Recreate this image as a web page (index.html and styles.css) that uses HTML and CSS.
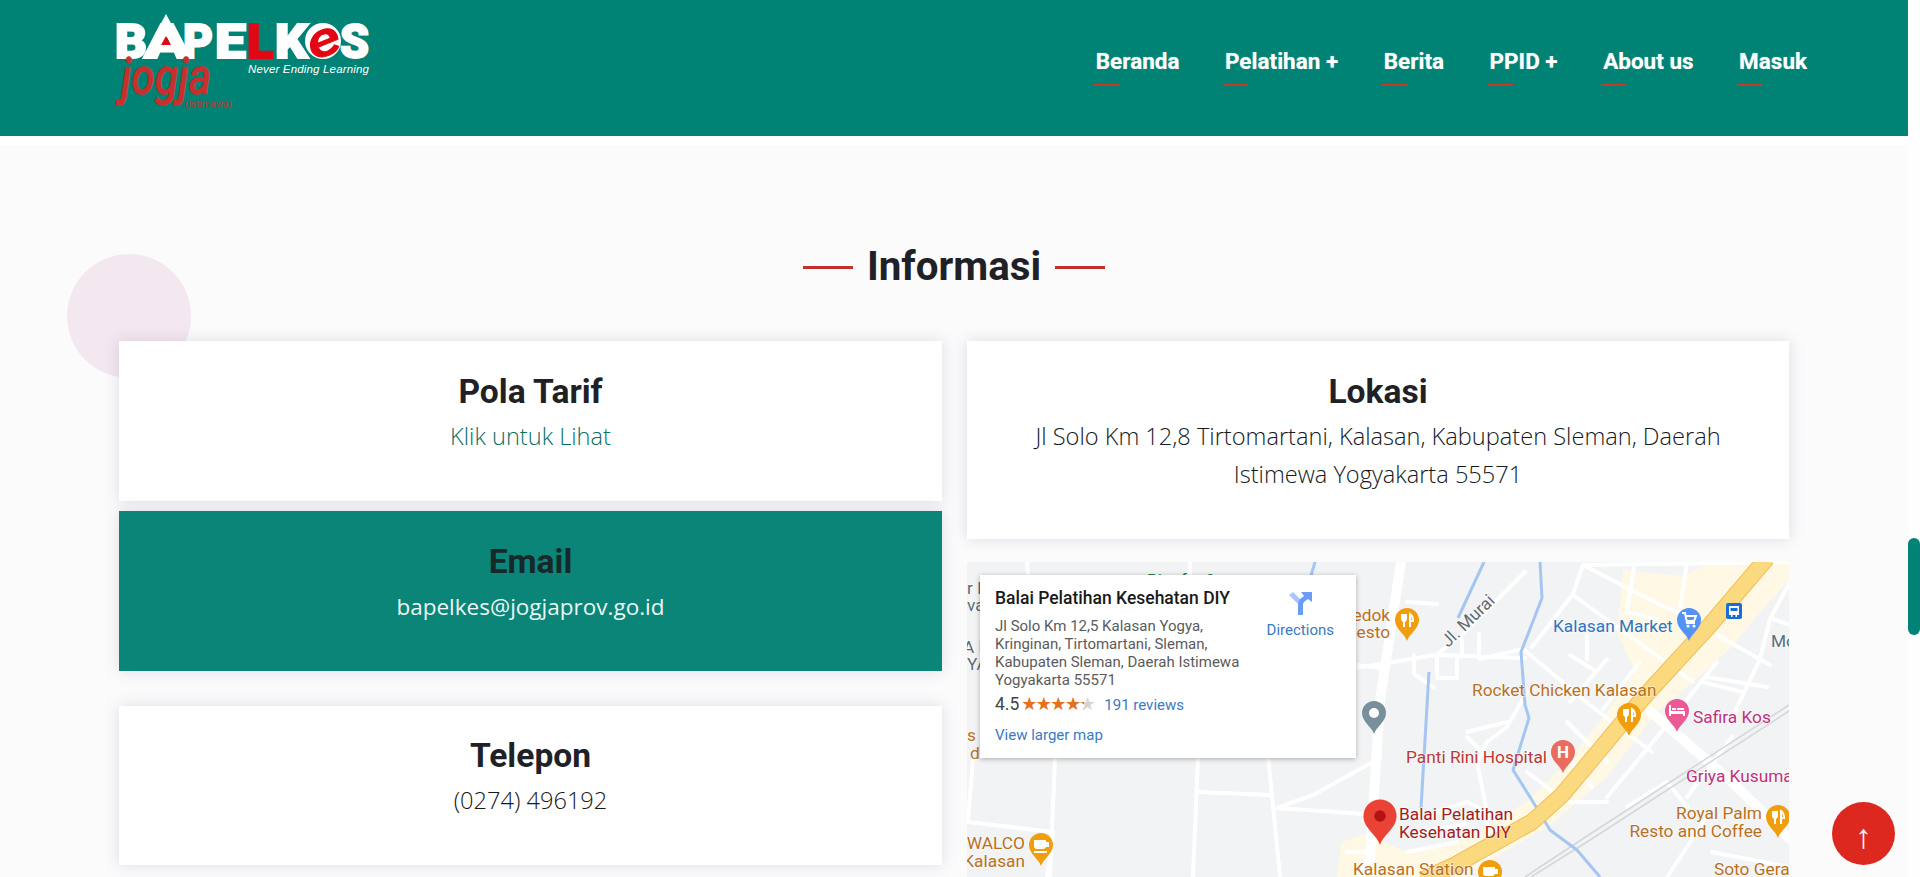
FILE: index.html
```html
<!DOCTYPE html>
<html lang="id">
<head>
<meta charset="utf-8">
<title>Informasi - Bapelkes Jogja</title>
<link rel="stylesheet" href="styles.css">
</head>
<body>
<div class="page">
  <header class="header">
    <a class="logo" href="#" aria-label="Bapelkes Jogja">
      <svg width="262" height="110" viewBox="0 0 262 110">
        <text class="lg-w" x="0" y="44" textLength="32" lengthAdjust="spacingAndGlyphs">B</text>
        <text class="lg-w" x="29" y="44" textLength="46" lengthAdjust="spacingAndGlyphs">A</text>
        <polygon class="lg-white" points="38,24 51,0 64,24"/>
        <polygon class="lg-red" points="46,31 51,22 56,31"/>
        <text class="lg-w" x="68" y="44" textLength="30" lengthAdjust="spacingAndGlyphs">P</text>
        <text class="lg-w" x="100" y="44" textLength="31" lengthAdjust="spacingAndGlyphs">E</text>
        <text class="lg-r" x="132" y="44" textLength="26" lengthAdjust="spacingAndGlyphs">L</text>
        <text class="lg-w" x="160" y="44" textLength="33" lengthAdjust="spacingAndGlyphs">K</text>
        <ellipse class="lg-white" cx="208" cy="27" rx="18" ry="18"/>
        <text class="lg-e" x="192" y="42" textLength="33" lengthAdjust="spacingAndGlyphs" transform="rotate(-22 208 27)">e</text>
        <text class="lg-w" x="225" y="44" textLength="29" lengthAdjust="spacingAndGlyphs">S</text>
        <text class="lg-tag" x="133" y="59" textLength="121">Never Ending Learning</text>
        <g transform="translate(6 80) scale(1 1.28)">
          <text class="lg-jogja" x="0" y="0" textLength="90" lengthAdjust="spacingAndGlyphs">jogja</text>
        </g>
        <text class="lg-ist" x="70" y="93" textLength="47" lengthAdjust="spacingAndGlyphs">(istimewa)</text>
      </svg>
    </a>
    <nav class="nav">
      <a class="nav-link" href="#">Beranda</a>
      <a class="nav-link" href="#">Pelatihan +</a>
      <a class="nav-link" href="#">Berita</a>
      <a class="nav-link" href="#">PPID +</a>
      <a class="nav-link" href="#">About us</a>
      <a class="nav-link" href="#">Masuk</a>
    </nav>
  </header>

  <main class="main">
    <span class="blob"></span>
    <h1 class="title"><span class="dash"></span>Informasi<span class="dash"></span></h1>
    <div class="grid">
      <div class="col">
        <section class="card card-pola">
          <h2>Pola Tarif</h2>
          <p><a class="tarif" href="#">Klik untuk Lihat</a></p>
        </section>
        <section class="card card-email">
          <h2>Email</h2>
          <p>bapelkes@jogjaprov.go.id</p>
        </section>
        <section class="card card-tel">
          <h2>Telepon</h2>
          <p>(0274) 496192</p>
        </section>
      </div>
      <div class="col">
        <section class="card card-lokasi">
          <h2>Lokasi</h2>
          <p>Jl Solo Km 12,8 Tirtomartani, Kalasan, Kabupaten Sleman, Daerah Istimewa Yogyakarta 55571</p>
        </section>
        <div class="map">
          <svg class="map-svg" width="822" height="315" viewBox="0 0 822 315">
            <defs>
              <path id="pin" d="M0,21 C-2,14 -12,9 -12,0 A12,12 0 1 1 12,0 C12,9 2,14 0,21Z"/>
              <g id="fork">
                <path class="ic-line" d="M-5,-6 V-2 Q-5,1 -3,1 Q-1,1 -1,-2 V-6 M-3,-6 V7 M3,7 V-6 Q6,-4 6,1 H3"/>
              </g>
              <g id="cup">
                <path class="ic-fill" d="M-7,-5 H5 V-3 H8 V2 H5 Q4,4 2,4 H-4 Q-7,4 -7,1Z M-7,6 H6 V8 H-7Z"/>
              </g>
            </defs>

            <rect class="m-bg" width="822" height="315"/>

            <polygon class="m-beige" points="656,8 715,14 745,0 822,0 822,18 785,60 765,85 715,130 690,150 640,215 585,262 520,300 500,315 370,315 374,280 398,272 440,290 490,280 560,240 600,200 640,150 668,110 650,70"/>

            <g class="m-road">
              <path d="M434,0 L413,138 L403,295 L395,315" class="m-wide"/>
              <path d="M231,196 L226,315 M233,230 L303,233 M301,193 L313,315 M413,196 L346,233 L310,246 L413,253 M88,196 L83,315 M6,196 L1,260 L86,270 L80,315 M60,0 L61,13 M223,0 L223,13 M390,103 L413,106"/>
              <path d="M388,106 L469,93 L558,96 M469,93 L495,73 L558,10 M495,73 L495,93 M512,72 L512,93 M440,40 L470,42 M447,93 L447,112 L466,125 M470,93 L470,116 L490,116 M490,95 L490,116"/>
              <path d="M565,85 L606,32 L616,3 L693,43 L730,57 M616,3 L822,0 M556,87 L513,97 M606,33 L726,120 M556,87 L623,143 L685,190 M663,30 L660,50 L690,57 M663,30 L668,0 M720,0 L713,47 M620,73 L620,97 M603,93 L630,110 M640,97 L603,140 M673,100 L636,147 M750,73 L803,103 M823,20 L803,57 L793,97 L763,160 M806,57 L823,63"/>
              <path d="M684,150 L765,220 L822,276" class="m-wide"/>
              <path d="M750,100 L690,175 L640,235 M735,120 L775,130 M740,115 L800,125 M765,175 L720,235 M660,245 L700,220 L720,245 M740,255 L700,315 M745,290 L822,305 M600,160 L640,200 M560,130 L540,165 L520,180 L510,200 L520,250 L520,300 M500,170 L540,160 M500,175 L520,195 M470,250 L500,240 L530,255 M450,270 L500,262 M380,290 L400,290 M440,290 L490,280 M560,210 L600,240 L640,240 M600,195 L625,225"/>
            </g>

            <path class="m-rail" d="M822,143 L617,276 L558,315 M822,149 L620,280 L564,315"/>

            <g class="m-water">
              <path d="M573,0 L575,36 L554,90 L558,143 L562,156 L546,208 L563,235 L583,268 L610,288 L633,315"/>
              <path d="M517,0 L491,56 M462,110 L454,246"/>
              <path d="M348,0 L343,17"/>
            </g>

            <path class="m-hw-c" d="M800,-4 L743,63 L676,136 L595,233 L565,260 L488,303 L455,318"/>
            <path class="m-hw" d="M800,-4 L743,63 L676,136 L595,233 L565,260 L488,303 L455,318"/>

            <text class="l l-gr" x="180" y="24">Biosfer 9</text>
            <text class="l l-gy" x="0" y="32">r l</text>
            <text class="l l-gy" x="0" y="49">va</text>
            <text class="l l-gy" x="-4" y="91">A E</text>
            <text class="l l-gy" x="0" y="108">YA</text>
            <text class="l l-or" x="0" y="179">s</text>
            <text class="l l-or" x="3" y="197">d</text>
            <text class="l l-or l-end" x="423" y="59">Bedok</text>
            <text class="l l-or l-end" x="423" y="76">Resto</text>
            <text class="l l-gy" transform="translate(481 86) rotate(-44)">Jl. Murai</text>
            <text class="l l-bl" x="586" y="70">Kalasan Market</text>
            <text class="l l-or" x="505" y="134">Rocket Chicken Kalasan</text>
            <text class="l l-pk" x="726" y="161">Safira Kos</text>
            <text class="l l-re" x="439" y="201">Panti Rini Hospital</text>
            <text class="l l-pk" x="719" y="220">Griya Kusuma</text>
            <text class="l l-or l-end" x="795" y="257">Royal Palm</text>
            <text class="l l-or l-end" x="795" y="275">Resto and Coffee</text>
            <text class="l l-or" x="747" y="313">Soto Geran</text>
            <text class="l l-or" x="386" y="313">Kalasan Station</text>
            <text class="l l-dr" x="432" y="258">Balai Pelatihan</text>
            <text class="l l-dr" x="432" y="276">Kesehatan DIY</text>
            <text class="l l-sl" x="804" y="85">Mo</text>
            <text class="l l-or l-end" x="58" y="287">WALCO</text>
            <text class="l l-or l-end" x="58" y="305">Kalasan</text>

            <g transform="translate(440 58)"><use href="#pin" class="p-or"/><use href="#fork"/></g>
            <g transform="translate(662 153)"><use href="#pin" class="p-or"/><use href="#fork"/></g>
            <g transform="translate(811 255)"><use href="#pin" class="p-or"/><use href="#fork"/></g>
            <g transform="translate(74 283)"><use href="#pin" class="p-or"/><use href="#cup"/></g>
            <g transform="translate(523 310)"><use href="#pin" class="p-or"/><use href="#cup"/></g>
            <g transform="translate(722 58)"><use href="#pin" class="p-bl"/>
              <path class="ic-line" d="M-7,-7 H-4 L-2,3 H6 M-3,-4 H7 L5,1 H-2"/>
              <circle class="ic-fill" cx="-1" cy="6" r="1.6"/><circle class="ic-fill" cx="5" cy="6" r="1.6"/>
            </g>
            <g transform="translate(767 49)">
              <rect class="p-bus" x="-8" y="-8" width="16" height="16" rx="2"/>
              <path class="ic-fill" d="M-5,-5 H5 V4 H3 V6 H1.5 V4 H-1.5 V6 H-3 V4 H-5Z"/>
              <rect class="p-bus" x="-3.5" y="-3" width="7" height="3"/>
            </g>
            <g transform="translate(710 149)"><use href="#pin" class="p-pk"/>
              <path class="ic-fill" d="M-8,-6 H-6 V0 H8 V5 H6 V3 H-6 V5 H-8Z M-5,-3 H-1 V-1 H-5Z M0,-3 H7 V-1 H0Z"/>
            </g>
            <g transform="translate(596 190)"><use href="#pin" class="p-re"/><text class="p-h" x="0" y="6">H</text></g>
            <g transform="translate(407 151)"><use href="#pin" class="p-sl"/><circle class="ic-fill" r="5"/></g>
            <g transform="translate(413 254) scale(1.38)"><use href="#pin" class="p-main"/><circle class="p-dot" r="4.2"/></g>
          </svg>

          <div class="popup">
            <div class="pop-info">
              <div class="pop-title">Balai Pelatihan Kesehatan DIY</div>
              <div class="pop-addr">Jl Solo Km 12,5 Kalasan Yogya, Kringinan, Tirtomartani, Sleman, Kabupaten Sleman, Daerah Istimewa Yogyakarta 55571</div>
              <div class="pop-rate">
                <span class="rate-num">4.5</span>
                <span class="stars"><span class="stars-on">★★★★★</span>★★★★★</span>
                <a class="pop-link" href="#">191 reviews</a>
              </div>
              <a class="pop-link pop-larger" href="#">View larger map</a>
            </div>
            <a class="pop-dir" href="#">
              <svg width="24" height="24" viewBox="0 0 24 24">
                <path class="dir-a" d="M1,4 L5,1 L13,9 V14 H11 Z"/>
                <path class="dir-b" d="M10,24 V13 Q10,10 12,8 L16,5 L13,1 H24 V11 L20,8 L16,11 Q15,12 15,14 V24Z"/>
              </svg>
              <span>Directions</span>
            </a>
          </div>
        </div>
      </div>
    </div>
  </main>

  <a class="to-top" href="#">↑</a>
</div>
<div class="scroll-track"><span class="scroll-thumb"></span></div>
</body>
</html>
```

FILE: styles.css
```css
* { box-sizing: border-box; }
html, body { margin: 0; padding: 0; height: 877px; overflow: hidden; background: #fdfdfe; }
a { text-decoration: none; color: inherit; }
h1, h2, p { margin: 0; }

.page {
  position: relative;
  width: 1908px;
  height: 877px;
  overflow: hidden;
  background: #fbfbfc;
  font-family: "Open Sans", sans-serif;
  color: #212529;
}

/* header */
.header {
  height: 136px;
  background: #008374;
  display: flex;
  align-items: flex-start;
  justify-content: space-between;
  padding: 14px 101px 0 115px;
}
.logo { display: block; height: 110px; }
.logo svg { display: block; }
.lg-w, .lg-r { font: 900 49px Roboto, sans-serif; }
.lg-w { fill: #fff; stroke: #fff; stroke-width: 2px; }
.lg-r { fill: #e30613; stroke: #e30613; stroke-width: 2px; }
.lg-white { fill: #fff; }
.lg-red { fill: #e30613; }
.lg-e { font: 500 italic 48px Roboto, sans-serif; fill: #e30613; stroke: #e30613; stroke-width: 1px; }
.lg-tag { font: italic 400 11.5px "Liberation Sans", sans-serif; fill: #fff; }
.lg-jogja { font: italic 500 40px Roboto, sans-serif; fill: #c7302c; stroke: #c7302c; stroke-width: .5px; }
.lg-ist { font: 400 9px Roboto, sans-serif; fill: #b83a30; }

.nav {
  display: flex;
  gap: 45.5px;
  padding-top: 33px;
  font: 700 22.5px/28px Roboto, sans-serif;
  color: #fff;
}
.nav-link { display: block; text-shadow: 0 0 1px rgba(255,255,255,.5); }
.nav-link::after {
  content: "";
  display: block;
  width: 25px;
  height: 2px;
  margin: 9px 0 0 -2px;
  background: #c93a2b;
}

/* main */
.main {
  position: relative;
  height: 741px;
  border-top: 9px solid #fff;
  padding: 0 119px;
}
.blob {
  position: absolute;
  left: 67px;
  top: 109px;
  width: 124px;
  height: 124px;
  border-radius: 50%;
  background: #f3e8f0;
}
.title {
  position: relative;
  display: flex;
  align-items: center;
  justify-content: center;
  gap: 14px;
  height: 50px;
  margin-top: 97px;
  font: 700 40.3px/50px Roboto, sans-serif;
  color: #1f2127;
}
.dash {
  display: block;
  width: 50px;
  height: 3px;
  background: #c0322b;
}
.grid {
  position: relative;
  display: grid;
  grid-template-columns: 823px 822px;
  gap: 25px;
  margin-top: 49px;
}
.col { display: flex; flex-direction: column; }
.card {
  height: 159px;
  padding: 32px 40px 0;
  background: #fff;
  text-align: center;
  box-shadow: 0 0 14px rgba(70, 70, 120, .17);
}
.card h2 {
  font: 700 33.6px/38px Roboto, sans-serif;
  color: #1f2127;
  margin-bottom: 6px;
}
.card p {
  font: 350 23.6px/38px "Open Sans", sans-serif;
  color: #16191d;
}
.card-pola { height: 160px; margin-bottom: 10px; }
.card-email { height: 160px; margin-bottom: 35px; background: #0b8577; }
.card-email h2 { color: #17282b; margin-bottom: 7px; }
.card-email p { color: #eaf7f4; font-weight: 400; font-size: 22.5px; }
.card-tel { padding-top: 31px; }
.tarif { color: #0a7064; }
.card-lokasi { height: 198px; margin-bottom: 23px; }

/* map */
.map { position: relative; height: 315px; overflow: hidden; }
.map-svg { display: block; }
.m-bg { fill: #f1f3f4; }
.m-beige { fill: #fef8e4; }
.m-road path { fill: none; stroke: #fff; stroke-width: 4px; stroke-linecap: round; stroke-linejoin: round; }
.m-road path.m-wide { stroke-width: 10px; }
.m-rail { fill: none; stroke: #d3d6da; stroke-width: 1.5px; }
.m-water path { fill: none; stroke: #a5c6f1; stroke-width: 3px; stroke-linejoin: round; }
.m-hw-c { fill: none; stroke: #f0bf5c; stroke-width: 17px; stroke-linejoin: round; }
.m-hw { fill: none; stroke: #fbd97f; stroke-width: 15px; stroke-linejoin: round; }
.l {
  font: 400 17.3px Roboto, sans-serif;
  paint-order: stroke;
  stroke: #fff;
  stroke-width: 1.5px;
  stroke-opacity: .6;
}
.l-end { text-anchor: end; }
.l-gr { fill: #188038; }
.l-gy { fill: #5f6a73; }
.l-or { fill: #b9701f; }
.l-bl { fill: #2f74c0; }
.l-pk { fill: #c2307c; }
.l-re { fill: #b93a32; }
.l-dr { fill: #a11c1c; }
.l-sl { fill: #55707e; }
.p-or { fill: #f09d0e; }
.p-bl { fill: #5492f5; }
.p-pk { fill: #ec5a96; }
.p-re { fill: #ea6c60; }
.p-sl { fill: #78909c; }
.p-main { fill: #ea4335; }
.p-dot { fill: #b31412; }
.p-bus { fill: #1a6dd3; }
.p-h { font: 700 17px Roboto, sans-serif; fill: #fff; text-anchor: middle; }
.ic-fill { fill: #fff; }
.ic-line { fill: none; stroke: #fff; stroke-width: 2px; }

/* info window */
.popup {
  position: absolute;
  left: 13px;
  top: 13px;
  width: 376px;
  height: 183px;
  display: flex;
  justify-content: space-between;
  padding: 12px 22px 0 15px;
  background: #fff;
  box-shadow: 0 1px 5px rgba(0, 0, 0, .3);
  font-family: Roboto, sans-serif;
}
.pop-info { width: 254px; }
.pop-title { font: 500 17.5px/22px Roboto, sans-serif; color: #1a1a1a; white-space: nowrap; }
.pop-addr { margin-top: 8px; font: 400 15px/18px Roboto, sans-serif; color: #5b5b5b; }
.pop-rate { display: flex; align-items: baseline; margin-top: 3px; line-height: 24px; }
.rate-num { font-size: 17.5px; color: #444; margin-right: 2px; }
.stars {
  position: relative;
  display: inline-block;
  width: 69px;
  margin-right: 14px;
  font: 400 18px/24px "DejaVu Sans", sans-serif;
  color: #d4d4d4;
  letter-spacing: -1.6px;
  white-space: nowrap;
}
.stars-on {
  position: absolute;
  left: 0;
  top: 0;
  width: 63px;
  overflow: hidden;
  color: #e7711b;
}
.pop-link { font-size: 15px; color: #3a7abf; }
.pop-larger { display: block; margin-top: 8px; line-height: 20px; }
.pop-dir {
  display: flex;
  flex-direction: column;
  align-items: center;
  gap: 6px;
  padding-top: 4px;
  font-size: 15px;
  line-height: 18px;
  color: #3a7abf;
}
.pop-dir svg { display: block; }
.dir-a { fill: #a8c6fa; }
.dir-b { fill: #6b9df5; }

/* overlays */
.to-top {
  position: absolute;
  left: 1832px;
  top: 802px;
  width: 63px;
  height: 63px;
  padding-top: 4px;
  border-radius: 50%;
  background: #dc281e;
  color: #fff;
  display: flex;
  align-items: center;
  justify-content: center;
  font: 400 34px/1 "Liberation Sans", sans-serif;
}
.scroll-track {
  position: fixed;
  left: 1908px;
  top: 0;
  width: 12px;
  height: 877px;
  background: #fefefe;
}
.scroll-thumb {
  position: absolute;
  left: 0;
  top: 538px;
  width: 12px;
  height: 97px;
  border-radius: 6px;
  background: #008374;
}
```
